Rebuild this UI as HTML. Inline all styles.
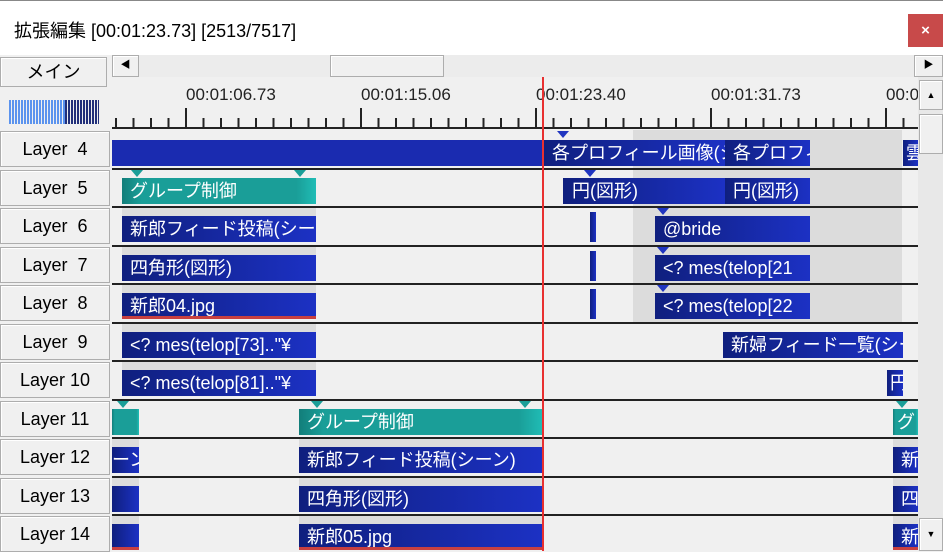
<!DOCTYPE html>
<html><head><meta charset="utf-8"><style>
*{margin:0;padding:0;box-sizing:border-box}
body{width:943px;height:551px;overflow:hidden;background:#f0f0f0;position:relative;font-family:"Liberation Sans","Noto Sans CJK JP",sans-serif}
.a{position:absolute}
.title{left:0;top:0;width:943px;height:55px;background:#fff;border-top:1px solid #888}
.title span{position:absolute;left:14px;top:16px;font-size:18px;color:#000}
.close{left:908px;top:14px;width:35px;height:33px;background:#c84a4a;color:#fff;font-size:15px;text-align:center;line-height:33px;font-weight:bold}
.btn{background:#f0f0f0;border:1px solid #adadad;box-shadow:inset 1px 1px #fff;text-align:center;color:#000;font-size:18px}
.lab{left:0;width:110px;height:36px;line-height:34px}
.row{left:112px;width:806px;height:38px;background:#f0f0f0;border-top:2px solid #222}
.gz{background:#dcdcdc}
.c{position:absolute;height:26px;color:#fff;font-size:18px;line-height:26px;padding-left:8px;white-space:nowrap;overflow:hidden;background:linear-gradient(90deg,#0f1f7e,#1c31c4)}
.t{background:linear-gradient(90deg,#127e7a,#1a9e98 10%,#1a9e98 90%,#20bdb6)}
.r{border-bottom:3px solid #c84040}
.lbl{font-size:17px;color:#222}
.tk{position:absolute;width:2px;background:#222}
.mk{position:absolute;width:0;height:0;border-left:6px solid transparent;border-right:6px solid transparent;border-top:7px solid #1a9e98}
.mb{border-top-color:#2035c0}
</style></head><body>
<div class="a title"><span>拡張編集 [00:01:23.73] [2513/7517]</span></div>
<div class="a close">×</div>

<div class="a btn" style="left:0;top:57px;width:107px;height:30px;line-height:28px">メイン</div>
<div class="a" style="left:112px;top:55px;width:831px;height:22px;background:#ececec"></div>
<div class="a btn" style="left:112px;top:55px;width:27px;height:22px;font-size:10px;line-height:20px">◀</div>
<div class="a btn" style="left:330px;top:55px;width:114px;height:22px"></div>
<div class="a btn" style="left:914px;top:55px;width:29px;height:22px;font-size:10px;line-height:20px">▶</div>
<div class="a" style="left:9px;top:100px;width:56px;height:24px;background:repeating-linear-gradient(90deg,#5b93ee 0 2px,#f0f0f0 2px 3px)"></div>
<div class="a" style="left:65px;top:100px;width:34px;height:24px;background:repeating-linear-gradient(90deg,#22307a 0 2px,#f0f0f0 2px 3px)"></div>

<div class="a" style="left:112px;top:77px;width:806px;height:53px;background:#f0f0f0"></div>
<div class="a lbl" style="left:186px;top:85px">00:01:06.73</div>
<div class="a lbl" style="left:361px;top:85px">00:01:15.06</div>
<div class="a lbl" style="left:536px;top:85px">00:01:23.40</div>
<div class="a lbl" style="left:711px;top:85px">00:01:31.73</div>
<div class="a lbl" style="left:886px;top:85px;width:32px;overflow:hidden">00:01</div>
<div class="a" style="left:112px;top:127px;width:806px;height:2px;background:#222"></div>
<div class="a" style="left:112px;top:118px;width:806px;height:10px;background:repeating-linear-gradient(90deg,transparent 0 3px,#222 3px 5px,transparent 5px 17.5px)"></div>
<div class="tk" style="left:185px;top:108px;height:20px"></div>
<div class="tk" style="left:360px;top:108px;height:20px"></div>
<div class="tk" style="left:535px;top:108px;height:20px"></div>
<div class="tk" style="left:710px;top:108px;height:20px"></div>
<div class="tk" style="left:885px;top:108px;height:20px"></div>

<div class="a" style="left:918px;top:77px;width:25px;height:474px;background:#e8e8e8"></div>
<div class="a btn" style="left:919px;top:80px;width:24px;height:30px;font-size:9px;line-height:28px">▲</div>
<div class="a btn" style="left:919px;top:114px;width:24px;height:40px"></div>
<div class="a btn" style="left:919px;top:518px;width:24px;height:33px;font-size:9px;line-height:31px">▼</div>

<div class="a btn lab" style="top:131px">Layer &nbsp;4</div>
<div class="a btn lab" style="top:170px">Layer &nbsp;5</div>
<div class="a btn lab" style="top:208px">Layer &nbsp;6</div>
<div class="a btn lab" style="top:247px">Layer &nbsp;7</div>
<div class="a btn lab" style="top:285px">Layer &nbsp;8</div>
<div class="a btn lab" style="top:324px">Layer &nbsp;9</div>
<div class="a btn lab" style="top:362px">Layer 10</div>
<div class="a btn lab" style="top:401px">Layer 11</div>
<div class="a btn lab" style="top:439px">Layer 12</div>
<div class="a btn lab" style="top:478px">Layer 13</div>
<div class="a btn lab" style="top:516px">Layer 14</div>

<div class="a row" style="top:130px;border-top:none"><div class="a gz" style="left:521px;width:269px;top:0;height:38px"></div></div>
<div class="a row" style="top:168px"><div class="a gz" style="left:521px;width:269px;top:0;height:36px"></div></div>
<div class="a row" style="top:206px"><div class="a gz" style="left:10px;width:194px;top:0;height:9px"></div><div class="a gz" style="left:521px;width:269px;top:0;height:37px"></div></div>
<div class="a row" style="top:245px"><div class="a gz" style="left:10px;width:194px;top:0;height:9px"></div><div class="a gz" style="left:521px;width:269px;top:0;height:36px"></div></div>
<div class="a row" style="top:283px"><div class="a gz" style="left:10px;width:194px;top:0;height:9px"></div><div class="a gz" style="left:521px;width:269px;top:0;height:37px"></div></div>
<div class="a row" style="top:322px"><div class="a gz" style="left:10px;width:194px;top:0;height:9px"></div></div>
<div class="a row" style="top:360px"><div class="a gz" style="left:10px;width:194px;top:0;height:9px"></div></div>
<div class="a row" style="top:399px"></div>
<div class="a row" style="top:437px"><div class="a gz" style="left:0;width:27px;top:0;height:9px"></div><div class="a gz" style="left:187px;width:244px;top:0;height:9px"></div><div class="a gz" style="left:781px;width:25px;top:0;height:9px"></div></div>
<div class="a row" style="top:476px"><div class="a gz" style="left:0;width:27px;top:0;height:9px"></div><div class="a gz" style="left:187px;width:244px;top:0;height:9px"></div><div class="a gz" style="left:781px;width:25px;top:0;height:9px"></div></div>
<div class="a row" style="top:514px;height:37px"><div class="a gz" style="left:0;width:27px;top:0;height:9px"></div><div class="a gz" style="left:187px;width:244px;top:0;height:9px"></div><div class="a gz" style="left:781px;width:25px;top:0;height:9px"></div></div>

<div class="c" style="left:112px;top:140px;width:431px;background:#1a2bb0"></div>
<div class="c" style="left:543px;top:140px;width:182px;padding-left:9px">各プロフィール画像(シ</div>
<div class="c" style="left:725px;top:140px;width:85px">各プロフィ</div>
<div class="c" style="left:903px;top:140px;width:15px;padding-left:3px">雲</div>
<div class="mk mb" style="left:557px;top:131px"></div>
<div class="c t" style="left:122px;top:178px;width:194px">グループ制御</div>
<div class="mk" style="left:131px;top:170px"></div><div class="mk" style="left:294px;top:170px"></div>
<div class="c" style="left:563px;top:178px;width:162px;padding-left:9px">円(図形)</div>
<div class="c" style="left:725px;top:178px;width:85px">円(図形)</div>
<div class="mk mb" style="left:584px;top:170px"></div>
<div class="c" style="left:122px;top:216px;width:194px">新郎フィード投稿(シーン</div>
<div class="c" style="left:590px;top:212px;width:6px;height:30px;padding:0"></div>
<div class="c" style="left:655px;top:216px;width:155px">@bride</div>
<div class="mk mb" style="left:657px;top:208px"></div>
<div class="c" style="left:122px;top:255px;width:194px">四角形(図形)</div>
<div class="c" style="left:590px;top:251px;width:6px;height:30px;padding:0"></div>
<div class="c" style="left:655px;top:255px;width:155px">&lt;? mes(telop[21</div>
<div class="mk mb" style="left:657px;top:247px"></div>
<div class="c r" style="left:122px;top:293px;width:194px">新郎04.jpg</div>
<div class="c" style="left:590px;top:289px;width:6px;height:30px;padding:0"></div>
<div class="c" style="left:655px;top:293px;width:155px">&lt;? mes(telop[22</div>
<div class="mk mb" style="left:657px;top:285px"></div>
<div class="c" style="left:122px;top:332px;width:194px">&lt;? mes(telop[73].."¥</div>
<div class="c" style="left:723px;top:332px;width:180px">新婦フィード一覧(シー</div>
<div class="c" style="left:122px;top:370px;width:194px">&lt;? mes(telop[81].."¥</div>
<div class="c" style="left:887px;top:370px;width:16px;padding-left:3px">円</div>
<div class="c t" style="left:112px;top:409px;width:27px"></div>
<div class="mk" style="left:117px;top:401px"></div>
<div class="c t" style="left:299px;top:409px;width:244px">グループ制御</div>
<div class="mk" style="left:311px;top:401px"></div><div class="mk" style="left:519px;top:401px"></div>
<div class="c t" style="left:893px;top:409px;width:25px;padding-left:4px">グ</div>
<div class="mk" style="left:896px;top:401px"></div>
<div class="c" style="left:112px;top:447px;width:27px;padding-left:0">ーン</div>
<div class="c" style="left:299px;top:447px;width:244px">新郎フィード投稿(シーン)</div>
<div class="c" style="left:893px;top:447px;width:25px;padding-left:8px">新</div>
<div class="c" style="left:112px;top:486px;width:27px"></div>
<div class="c" style="left:299px;top:486px;width:244px">四角形(図形)</div>
<div class="c" style="left:893px;top:486px;width:25px;padding-left:8px">四</div>
<div class="c r" style="left:112px;top:524px;width:27px"></div>
<div class="c r" style="left:299px;top:524px;width:244px">新郎05.jpg</div>
<div class="c r" style="left:893px;top:524px;width:25px;padding-left:8px">新</div>

<div class="a" style="left:542px;top:77px;width:2px;height:474px;background:#e83030"></div>
</body></html>
